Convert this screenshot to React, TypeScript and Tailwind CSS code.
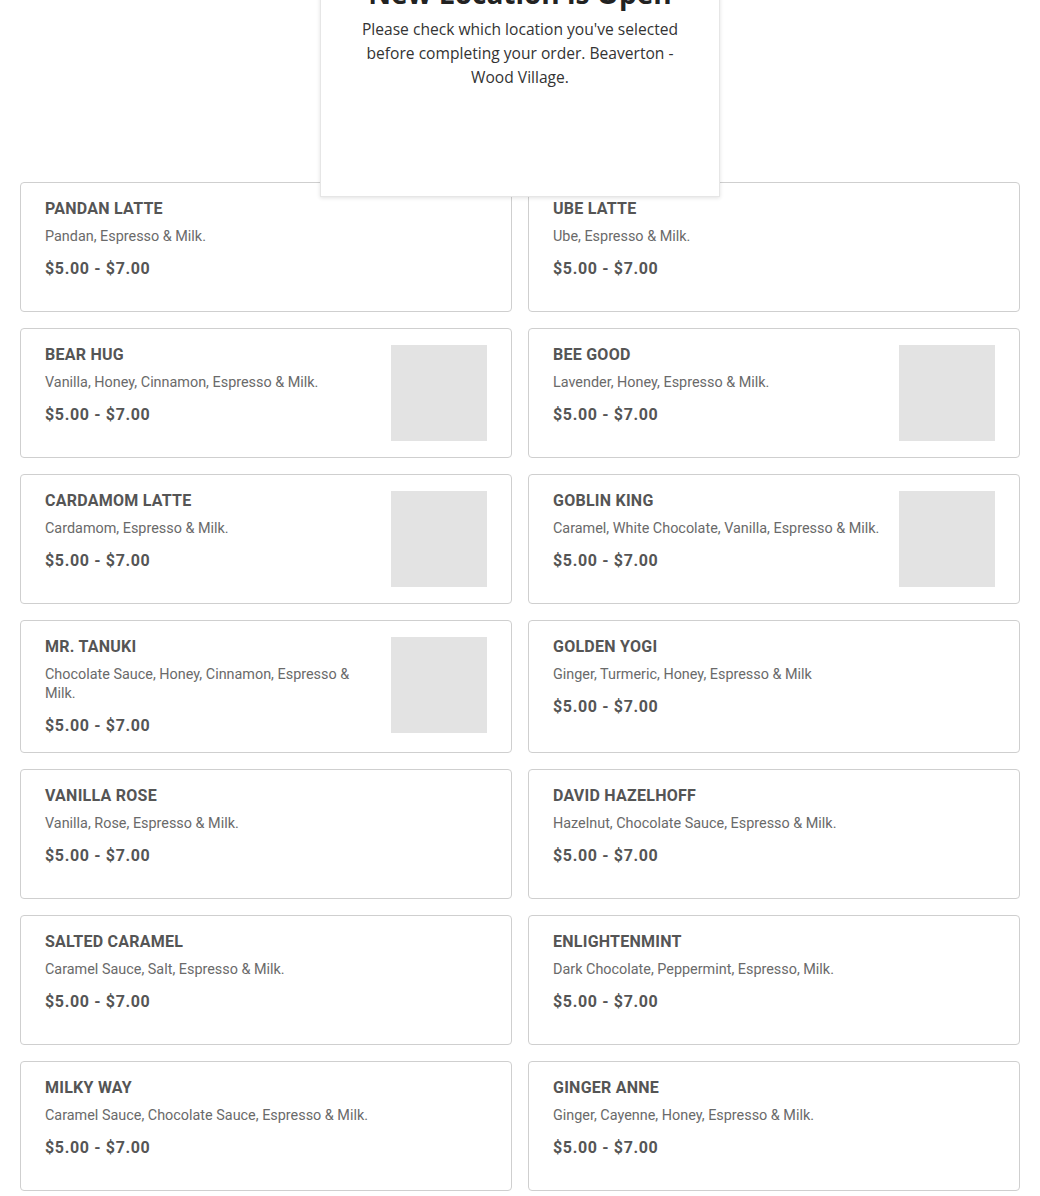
import React from "react";

type Item = { name: string; desc: string; img?: boolean };

const items: Item[] = [
  { name: "PANDAN LATTE", desc: "Pandan, Espresso & Milk." },
  { name: "UBE LATTE", desc: "Ube, Espresso & Milk." },
  { name: "BEAR HUG", desc: "Vanilla, Honey, Cinnamon, Espresso & Milk.", img: true },
  { name: "BEE GOOD", desc: "Lavender, Honey, Espresso & Milk.", img: true },
  { name: "CARDAMOM LATTE", desc: "Cardamom, Espresso & Milk.", img: true },
  { name: "GOBLIN KING", desc: "Caramel, White Chocolate, Vanilla, Espresso & Milk.", img: true },
  { name: "MR. TANUKI", desc: "Chocolate Sauce, Honey, Cinnamon, Espresso & Milk.", img: true },
  { name: "GOLDEN YOGI", desc: "Ginger, Turmeric, Honey, Espresso & Milk" },
  { name: "VANILLA ROSE", desc: "Vanilla, Rose, Espresso & Milk." },
  { name: "DAVID HAZELHOFF", desc: "Hazelnut, Chocolate Sauce, Espresso & Milk." },
  { name: "SALTED CARAMEL", desc: "Caramel Sauce, Salt, Espresso & Milk." },
  { name: "ENLIGHTENMINT", desc: "Dark Chocolate, Peppermint, Espresso, Milk." },
  { name: "MILKY WAY", desc: "Caramel Sauce, Chocolate Sauce, Espresso & Milk." },
  { name: "GINGER ANNE", desc: "Ginger, Cayenne, Honey, Espresso & Milk." },
];

function Card({ item }: { item: Item }) {
  return (
    <div className="border border-[#cfcfcf] rounded-[4px] bg-white px-6 py-4 flex gap-4 min-h-[130px]">
      <div className="flex-1 min-w-0">
        <div className="text-[16px] leading-[20px] font-bold tracking-[0.25px] text-[#555555]">{item.name}</div>
        <div className="mt-2 text-[14.4px] leading-[19px] text-[#6a6a6a]">{item.desc}</div>
        <div className="mt-[13px] text-[16px] leading-[20px] font-bold tracking-[0.65px] text-[#555555]">$5.00 - $7.00</div>
      </div>
      {item.img ? <div className="w-24 h-24 shrink-0 bg-[#e3e3e3]" /> : null}
    </div>
  );
}

export default function App() {
  return (
    <div className="relative w-[1040px] h-[1196px] overflow-hidden bg-white" style={{ fontFamily: "Roboto, 'Liberation Sans', sans-serif" }}>
      <div className="h-[182px]" />
      <div className="px-5 grid grid-cols-2 gap-4">
        {items.map((it) => (
          <Card key={it.name} item={it} />
        ))}
      </div>
      <div
        className="absolute left-[320px] top-[-40px] w-[400px] h-[237px] bg-white border border-[#e6e6e6] shadow-[0_1px_4px_rgba(0,0,0,0.12)] text-center px-9"
        style={{ fontFamily: "'Open Sans', sans-serif" }}
      >
        <div className="text-[28px] leading-[36px] font-bold text-[#222222] pt-[14px]">New Location is Open</div>
        <div className="mt-[6px] text-[15.6px] leading-[24px] text-[#333333]">
          Please check which location you've selected before completing your order. Beaverton - Wood Village.
        </div>
      </div>
    </div>
  );
}
